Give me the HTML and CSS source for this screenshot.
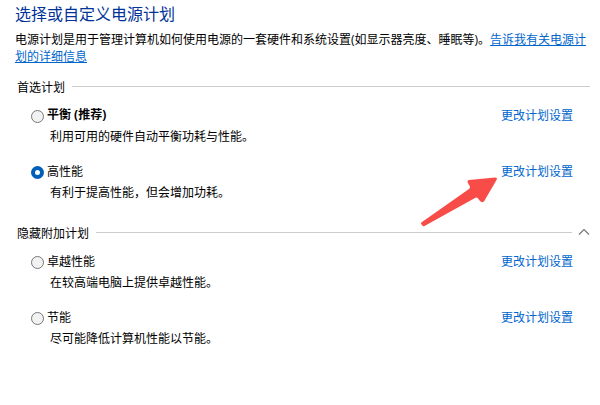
FILE: index.html
```html
<!DOCTYPE html>
<html lang="zh-CN">
<head>
<meta charset="utf-8">
<meta name="viewport" content="width=device-width, initial-scale=1">
<title>电源选项</title>
<link rel="stylesheet" href="styles.css">
</head>
<body>
<main class="page">
  <h1 class="title">选择或自定义电源计划</h1>
  <p class="intro">电源计划是用于管理计算机如何使用电源的一套硬件和系统设置(如显示器亮度、睡眠等)。<a class="help" href="#">告诉我有关电源计划的详细信息</a></p>

  <section class="group">
    <header class="group-head">
      <h2 class="group-title">首选计划</h2>
      <span class="rule"></span>
    </header>
    <div class="plans">
      <div class="plan">
        <input class="radio" type="radio" name="plan" id="balanced">
        <label class="name recommended" for="balanced">平衡 (推荐)</label>
        <a class="change" href="#">更改计划设置</a>
        <p class="desc">利用可用的硬件自动平衡功耗与性能。</p>
      </div>
      <div class="plan">
        <input class="radio" type="radio" name="plan" id="high" checked>
        <label class="name" for="high">高性能</label>
        <a class="change" href="#">更改计划设置
          <svg class="arrow" width="80" height="54" viewBox="0 0 80 54" aria-hidden="true">
            <path d="M2 49 L49 16 Q51 14 49 12 L47.500 9 Q47 7.500 49 7 L75 4.500 Q78 4.500 76.500 7 L64 28.500 Q62 30 60 28 L58 25.500 Q57 24 55 25 L4.500 53 Q3 54 2 52 Q0 50 2 49 Z" fill="#f84c48"/>
          </svg>
        </a>
        <p class="desc">有利于提高性能，但会增加功耗。</p>
      </div>
    </div>
  </section>

  <section class="group">
    <header class="group-head">
      <h2 class="group-title">隐藏附加计划</h2>
      <span class="rule"></span>
      <button class="toggle" type="button" aria-label="隐藏附加计划">
        <svg width="12" height="8" viewBox="0 0 12 8" aria-hidden="true"><path d="M1 6.500 L6 1.500 L11 6.500" fill="none" stroke="#777" stroke-width="1.200"/></svg>
      </button>
    </header>
    <div class="plans">
      <div class="plan">
        <input class="radio" type="radio" name="plan" id="ultimate">
        <label class="name" for="ultimate">卓越性能</label>
        <a class="change" href="#">更改计划设置</a>
        <p class="desc">在较高端电脑上提供卓越性能。</p>
      </div>
      <div class="plan">
        <input class="radio" type="radio" name="plan" id="saver">
        <label class="name" for="saver">节能</label>
        <a class="change" href="#">更改计划设置</a>
        <p class="desc">尽可能降低计算机性能以节能。</p>
      </div>
    </div>
  </section>
</main>
</body>
</html>
```
FILE: styles.css
```css
* {
  box-sizing: border-box;
}

body {
  margin: 0;
  background: #fff;
  color: #000;
  font: 12px/17px "Noto Sans CJK SC", sans-serif;
}

h1, h2, p {
  margin: 0;
  font-weight: 400;
}

a {
  color: #0066cc;
  text-decoration: none;
}

.page {
  padding: 2px 10px 16px 15px;
}

.title {
  color: #003399;
  font-size: 16px;
  line-height: 22px;
}

.intro {
  margin-top: 7px;
  font-family: "Open Sans", "Noto Sans CJK SC", sans-serif;
}

.help {
  text-decoration: underline;
}

.group {
  margin-top: 11px;
  padding-left: 2px;
}

.group + .group {
  margin-top: 20px;
}

.group-head {
  display: flex;
  align-items: center;
  height: 20px;
}

.group-title {
  font-size: 12px;
}

.rule {
  flex: 1;
  height: 1px;
  margin-left: 7px;
  background: #ccc;
}

.toggle {
  display: flex;
  justify-content: flex-end;
  width: 18px;
  padding: 0;
  border: 0;
  background: none;
}

.plans {
  display: grid;
  gap: 14px;
  padding: 8px 17px 0 14px;
}

.plan {
  display: grid;
  grid-template-columns: 13px 1fr auto;
  grid-template-rows: 21px 21px;
  column-gap: 3px;
  align-items: center;
}

.radio {
  appearance: none;
  align-self: end;
  width: 13px;
  height: 13px;
  margin: 0 0 2px;
  border: 1px solid #777;
  border-radius: 50%;
  background: #f2f2f2;
}

.radio:checked {
  border: 4px solid #005fb8;
  background: #fff;
}

.recommended {
  font-family: "Open Sans", "Noto Sans CJK SC", sans-serif;
  font-weight: 700;
}

.change {
  position: relative;
}

.arrow {
  position: absolute;
  top: 11px;
  right: 73px;
}

.desc {
  grid-column: 2 / -1;
  padding-left: 3px;
}
```
